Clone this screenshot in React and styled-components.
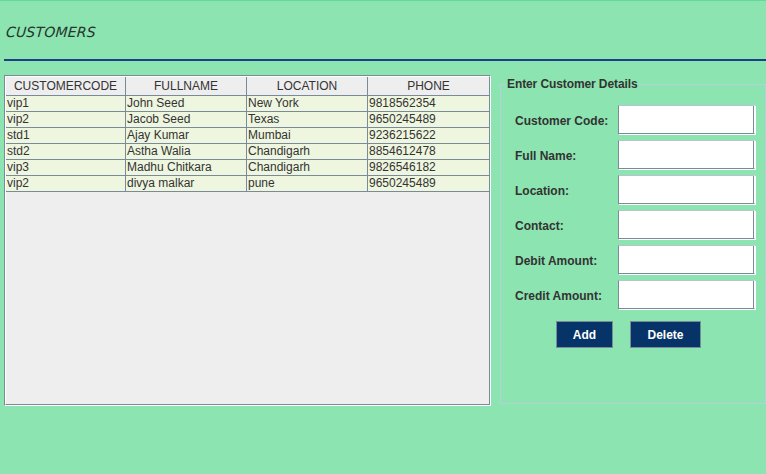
import React from 'react';
import styled, { createGlobalStyle } from 'styled-components';

const GlobalStyle = createGlobalStyle`
  html, body {
    margin: 0;
    padding: 0;
    background: #8ce4b0;
    overflow: hidden;
  }
  body {
    font-family: 'Liberation Sans', Arial, sans-serif;
    font-size: 12px;
    color: #333;
  }
`;

const Frame = styled.div`
  width: 766px;
  height: 474px;
  box-sizing: border-box;
  border-top: 1px solid #62d994;
  background: #8ce4b0;
`;

const Header = styled.div`
  height: 58px;
  margin-left: 4px;
  border-bottom: 2px solid #1d3f8a;
  display: flex;
  align-items: center;
`;

const Title = styled.h1`
  margin: 4px 0 0 2px;
  font-family: 'DejaVu Sans', 'Liberation Sans', sans-serif;
  font-style: italic;
  font-weight: normal;
  font-size: 14px;
  letter-spacing: 0.2px;
  color: #27352e;
  transform: skewX(-4deg);
`;

const Main = styled.div`
  display: flex;
  align-items: flex-start;
  padding: 14px 0 0 4px;
`;

const ScrollPane = styled.div`
  width: 487px;
  height: 331px;
  box-sizing: border-box;
  border: 1px solid;
  border-color: #7a8a99 #fff #fff #7a8a99;
`;

const PaneInner = styled.div`
  height: 100%;
  box-sizing: border-box;
  border: 1px solid;
  border-color: #fff #7a8a99 #7a8a99 #fff;
  background: #eeeeee;
`;

const Table = styled.table`
  width: 483px;
  table-layout: fixed;
  border-collapse: separate;
  border-spacing: 0;
  font-size: 12px;
`;

const Th = styled.th`
  width: ${p => p.w}px;
  height: 18px;
  padding: 0;
  box-sizing: border-box;
  background: #eeeeee;
  font-weight: normal;
  color: #333;
  text-align: center;
  border-bottom: 1px solid #7a8a99;
  border-right: ${p => (p.last ? 'none' : '1px solid #7a8a99')};
  line-height: 18px;
`;

const Td = styled.td`
  height: 15px;
  padding: 0 0 0 1px;
  box-sizing: border-box;
  background: #eef6df;
  color: #333;
  line-height: 15px;
  white-space: nowrap;
  overflow: hidden;
  border-bottom: 1px solid #7a8a99;
  border-right: ${p => (p.last ? 'none' : '1px solid #7a8a99')};
`;

const Fieldset = styled.fieldset`
  margin: 2px 0 0 9px;
  padding: 0;
  width: 267px;
  height: 327px;
  box-sizing: border-box;
  border: 1px solid #b5d0da;
  min-width: 0;
`;

const Legend = styled.legend`
  margin-left: 5px;
  padding: 0 1px;
  font-weight: bold;
  font-size: 12px;
  letter-spacing: -0.1px;
  color: #333;
`;

const Form = styled.div`
  display: grid;
  grid-template-columns: 103px 137px;
  row-gap: 6px;
  align-items: center;
  padding: 14px 0 0 14px;
`;

const Label = styled.label`
  font-weight: bold;
  font-size: 12px;
  color: #333;
  padding-top: 2px;
`;

const Input = styled.input`
  width: 137px;
  height: 29px;
  box-sizing: border-box;
  background: #fff;
  border: 1px solid;
  border-color: #b9c3cc #fff #7a8a99 #7a8a99;
  box-shadow: 1px 1px 0 #fff, inset -1px 0 0 #7a8a99;
  outline: none;
  padding: 0 3px;
`;

const Buttons = styled.div`
  display: flex;
  gap: 17px;
  padding: 12px 0 0 55px;
`;

const Button = styled.button`
  height: 27px;
  width: ${p => p.w}px;
  box-sizing: border-box;
  background: #063468;
  border: 1px solid #7b8a99;
  color: #fff;
  font-family: 'Liberation Sans', Arial, sans-serif;
  font-weight: bold;
  font-size: 12px;
  padding: 0;
`;

const columns = [
  { name: 'CUSTOMERCODE', w: 120 },
  { name: 'FULLNAME', w: 121 },
  { name: 'LOCATION', w: 121 },
  { name: 'PHONE', w: 121 },
];

const customers = [
  ['vip1', 'John Seed', 'New York', '9818562354'],
  ['vip2', 'Jacob Seed', 'Texas', '9650245489'],
  ['std1', 'Ajay Kumar', 'Mumbai', '9236215622'],
  ['std2', 'Astha Walia', 'Chandigarh', '8854612478'],
  ['vip3', 'Madhu Chitkara', 'Chandigarh', '9826546182'],
  ['vip2', 'divya malkar', 'pune', '9650245489'],
];

const fields = ['Customer Code:', 'Full Name:', 'Location:', 'Contact:', 'Debit Amount:', 'Credit Amount:'];

const App = () => {
  return (
    <>
      <GlobalStyle />
      <Frame>
        <Header>
          <Title>CUSTOMERS</Title>
        </Header>
        <Main>
          <ScrollPane>
            <PaneInner>
              <Table>
                <thead>
                  <tr>
                    {columns.map((c, i) => (
                      <Th key={c.name} w={c.w} last={i === columns.length - 1}>{c.name}</Th>
                    ))}
                  </tr>
                </thead>
                <tbody>
                  {customers.map((row, r) => (
                    <tr key={r}>
                      {row.map((cell, i) => (
                        <Td key={i} last={i === row.length - 1}>{cell}</Td>
                      ))}
                    </tr>
                  ))}
                </tbody>
              </Table>
            </PaneInner>
          </ScrollPane>
          <Fieldset>
            <Legend>Enter Customer Details</Legend>
            <Form>
              {fields.map(f => (
                <React.Fragment key={f}>
                  <Label>{f}</Label>
                  <Input type="text" />
                </React.Fragment>
              ))}
            </Form>
            <Buttons>
              <Button w={57}>Add</Button>
              <Button w={71}>Delete</Button>
            </Buttons>
          </Fieldset>
        </Main>
      </Frame>
    </>
  );
};

export default App;
